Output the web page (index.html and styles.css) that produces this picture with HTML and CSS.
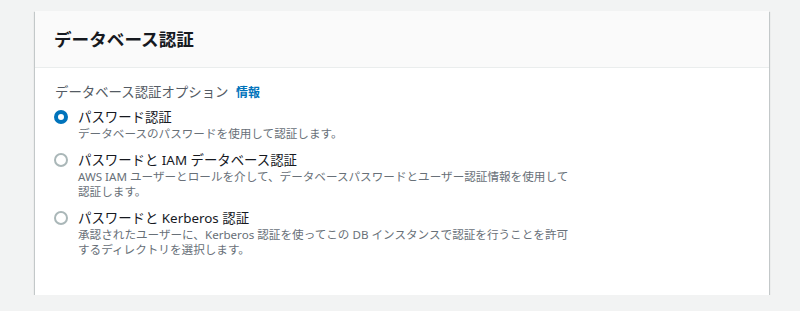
FILE: index.html
```html
<!DOCTYPE html>
<html lang="ja">
<head>
<meta charset="utf-8">
<link rel="stylesheet" href="styles.css">
</head>
<body>
<div class="card">
  <div class="card-header">
    <h2 class="title">データベース認証</h2>
  </div>
  <div class="card-body">
    <div class="label">データベース認証オプション <span class="info">情報</span></div>
    <div class="options">
      <div class="option">
        <span class="radio checked"></span>
        <div class="option-text">
          <div class="option-title">パスワード認証</div>
          <div class="option-desc">データベースのパスワードを使用して認証します。</div>
        </div>
      </div>
      <div class="option">
        <span class="radio"></span>
        <div class="option-text">
          <div class="option-title">パスワードと IAM データベース認証</div>
          <div class="option-desc">AWS IAM ユーザーとロールを介して、データベースパスワードとユーザー認証情報を使用して認証します。</div>
        </div>
      </div>
      <div class="option">
        <span class="radio"></span>
        <div class="option-text">
          <div class="option-title">パスワードと Kerberos 認証</div>
          <div class="option-desc">承認されたユーザーに、Kerberos 認証を使ってこの DB インスタンスで認証を行うことを許可するディレクトリを選択します。</div>
        </div>
      </div>
    </div>
  </div>
</div>
</body>
</html>
```
FILE: styles.css
```css
html, body {
  margin: 0;
  padding: 0;
}
body {
  background: #f2f3f3;
  font-family: "Noto Sans", "Noto Sans CJK JP", sans-serif;
  color: #16191f;
  padding: 11px 31px 0 35px;
}
.card {
  background: #fff;
  box-shadow: 0 1px 1px 0 rgba(0, 28, 36, 0.3), 1px 1px 1px 0 rgba(0, 28, 36, 0.15), -1px 1px 1px 0 rgba(0, 28, 36, 0.15);
  height: 284px;
}
.card-header {
  background: #fafafa;
  border-bottom: 1px solid #eaeded;
  height: 57px;
  box-sizing: border-box;
  padding: 0 19px;
  display: flex;
  align-items: center;
}
.title {
  margin: 0;
  font-size: 17.6px;
  font-weight: 700;
  line-height: 24px;
  color: #16191f;
}
.card-body {
  padding: 13px 20px 20px 20px;
}
.label {
  font-size: 13.4px;
  line-height: 22px;
  color: #545b64;
}
.info {
  color: #0073bb;
  font-size: 12px;
  font-weight: 700;
  margin-left: 4px;
}
.options {
  display: flex;
  flex-direction: column;
  gap: 10px;
  margin-top: 4px;
}
.option {
  display: flex;
  align-items: flex-start;
  gap: 10px;
}
.radio {
  width: 14px;
  height: 14px;
  box-sizing: border-box;
  border-radius: 50%;
  border: 2px solid #aab7b8;
  margin-top: 2px;
  margin-left: -1px;
  flex: none;
  background: #fff;
}
.radio.checked {
  border: 4px solid #0073bb;
}
.option-title {
  font-size: 13.4px;
  line-height: 18px;
  color: #16191f;
}
.option-desc {
  font-size: 11.6px;
  line-height: 15px;
  color: #687078;
  max-width: 497px;
}
```
